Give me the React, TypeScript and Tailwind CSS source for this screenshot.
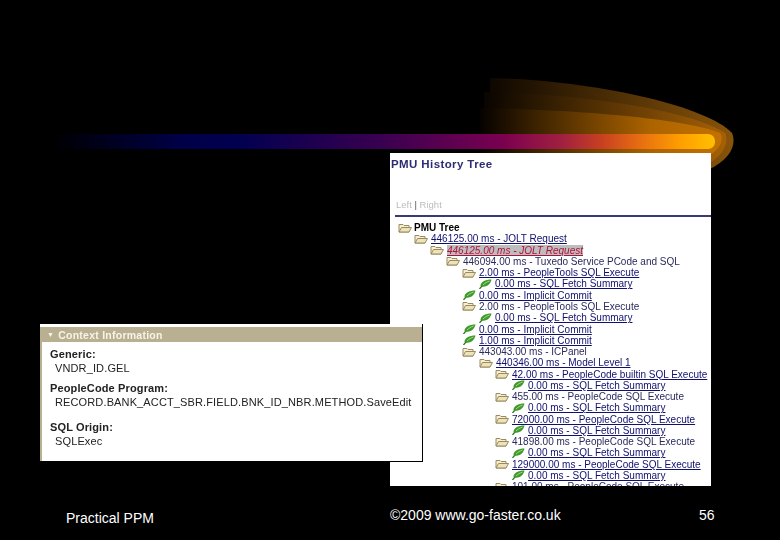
const font = "font-['Liberation_Sans',Arial,sans-serif]"

type Row = {
    pad: string
    icon: "folder" | "leaf"
    text: string
    link?: boolean
    active?: boolean
}

const rows: Row[] = [
    { pad: "pl-[24px]", icon: "folder", text: "446125.00 ms - JOLT Request", link: true },
    { pad: "pl-[40px]", icon: "folder", text: "446125.00 ms - JOLT Request", link: true, active: true },
    { pad: "pl-[56px]", icon: "folder", text: "446094.00 ms - Tuxedo Service PCode and SQL" },
    { pad: "pl-[72px]", icon: "folder", text: "2.00 ms - PeopleTools SQL Execute", link: true },
    { pad: "pl-[88px]", icon: "leaf", text: "0.00 ms - SQL Fetch Summary", link: true },
    { pad: "pl-[72px]", icon: "leaf", text: "0.00 ms - Implicit Commit", link: true },
    { pad: "pl-[72px]", icon: "folder", text: "2.00 ms - PeopleTools SQL Execute" },
    { pad: "pl-[88px]", icon: "leaf", text: "0.00 ms - SQL Fetch Summary", link: true },
    { pad: "pl-[72px]", icon: "leaf", text: "0.00 ms - Implicit Commit", link: true },
    { pad: "pl-[72px]", icon: "leaf", text: "1.00 ms - Implicit Commit", link: true },
    { pad: "pl-[72px]", icon: "folder", text: "443043.00 ms - ICPanel" },
    { pad: "pl-[89px]", icon: "folder", text: "440346.00 ms - Model Level 1", link: true },
    { pad: "pl-[105px]", icon: "folder", text: "42.00 ms - PeopleCode builtin SQL Execute", link: true },
    { pad: "pl-[121px]", icon: "leaf", text: "0.00 ms - SQL Fetch Summary", link: true },
    { pad: "pl-[105px]", icon: "folder", text: "455.00 ms - PeopleCode SQL Execute" },
    { pad: "pl-[121px]", icon: "leaf", text: "0.00 ms - SQL Fetch Summary", link: true },
    { pad: "pl-[105px]", icon: "folder", text: "72000.00 ms - PeopleCode SQL Execute", link: true },
    { pad: "pl-[121px]", icon: "leaf", text: "0.00 ms - SQL Fetch Summary", link: true },
    { pad: "pl-[105px]", icon: "folder", text: "41898.00 ms - PeopleCode SQL Execute" },
    { pad: "pl-[121px]", icon: "leaf", text: "0.00 ms - SQL Fetch Summary", link: true },
    { pad: "pl-[105px]", icon: "folder", text: "129000.00 ms - PeopleCode SQL Execute", link: true },
    { pad: "pl-[121px]", icon: "leaf", text: "0.00 ms - SQL Fetch Summary", link: true },
    { pad: "pl-[105px]", icon: "folder", text: "101.00 ms - PeopleCode SQL Execute" },
]

function FolderIcon() {
    return (
        <svg width="14" height="10" viewBox="0 0 14 10" className="shrink-0">
            <path d="M1 1.500h4l1 1h5v6.500H1z" fill="#f6efd6" stroke="#9a8a5c" strokeWidth="1" />
            <path d="M3.500 4.500H13.500L11 9H1z" fill="#ece2bc" stroke="#9a8a5c" strokeWidth="1" />
        </svg>
    )
}

function LeafIcon() {
    return (
        <svg width="14" height="10" viewBox="0 0 14 10" className="shrink-0">
            <path d="M1.500 10C2.500 8.500 3.500 7.500 5 6" stroke="#2f7a20" strokeWidth="1.300" fill="none" />
            <path d="M2.500 7C2.500 3 7 0.500 13.500 0.500C12.500 5 9 8.500 3.500 7.500z" fill="#3f9a2c" />
            <path d="M5 6C7 4 9 3 11.500 2" stroke="#b7e08e" strokeWidth="0.900" fill="none" />
        </svg>
    )
}

function Flare() {
    return (
        <svg width="780" height="200" viewBox="0 0 780 200" className="absolute left-0 top-0">
            <defs>
                <linearGradient id="outer" x1="483" x2="735" y1="0" y2="0" gradientUnits="userSpaceOnUse">
                    <stop offset="0" stopColor="#0a0500" />
                    <stop offset="1" stopColor="#8a540a" />
                </linearGradient>
                <linearGradient id="middle" x1="483" x2="730" y1="0" y2="0" gradientUnits="userSpaceOnUse">
                    <stop offset="0" stopColor="#080400" />
                    <stop offset="1" stopColor="#a86206" />
                </linearGradient>
                <linearGradient id="inner" x1="480" x2="725" y1="0" y2="0" gradientUnits="userSpaceOnUse">
                    <stop offset="0" stopColor="#050200" />
                    <stop offset="0.7" stopColor="#ad6400" />
                    <stop offset="1" stopColor="#c47200" />
                </linearGradient>
            </defs>
            <path d="M490 78C590 80 705 105 732 133C737 145 730 160 708 170L490 170z" fill="url(#outer)" />
            <path d="M484 92C590 94 695 112 725 133C730 143 722 156 708 164L484 164z" fill="url(#middle)" />
            <path d="M480 108C590 110 690 120 720 133C725 141 718 151 708 156L480 156z" fill="url(#inner)" />
        </svg>
    )
}

function TreeRow({ row }: { row: Row }) {
    return (
        <div className={`flex h-[11.27px] items-center gap-[3px] whitespace-nowrap ${row.pad}`}>
            {row.icon === "folder" ? <FolderIcon /> : <LeafIcon />}
            <span
                className={
                    row.active
                        ? "bg-[#bdbdbd] italic text-[#b0103c] underline"
                        : row.link
                            ? "text-[#10106e] underline"
                            : "text-[#2a2a5e]"
                }
            >
                {row.text}
            </span>
        </div>
    )
}

function HistoryPanel() {
    return (
        <div className={`relative ml-[390px] mt-[4px] h-[333px] w-[321px] overflow-hidden bg-white ${font}`}>
            <div className="ml-px mt-[5px] text-[11.5px] font-bold leading-[13px] tracking-[0.4px] text-[#2c2c72] blur-[0.3px]">PMU History Tree</div>
            <div className="ml-[6px] mt-[28px] text-[9.5px] leading-[12px] text-[#bdbdbd] blur-[0.3px]">
                Left <span className="text-[#555]">|</span> Right
            </div>
            <div className="ml-[5px] mt-[4px] h-[2px] bg-[#3c3a72]" />
            <div className="mt-[5px] text-[10px] leading-[11px] blur-[0.4px]">
                <div className="flex h-[11.27px] items-center gap-[2px] pl-[8px] font-bold text-black">
                    <FolderIcon />
                    <span>PMU Tree</span>
                </div>
                {rows.map((row, i) => (
                    <TreeRow key={i} row={row} />
                ))}
            </div>
        </div>
    )
}

function ContextPanel() {
    return (
        <div className={`absolute left-[40px] top-[324px] h-[138px] w-[383px] border-b border-r border-black bg-white pl-[2px] pt-[3px] ${font}`}>
            <div className="absolute bottom-0 left-0 top-[3px] w-[2px] bg-[#b8b090]" />
            <div className="flex h-[15px] items-center gap-[4px] bg-[#b8b090] pl-[5px] pt-[2px] text-[10.5px] font-bold tracking-[0.25px] text-[#f6f4e8] blur-[0.3px]">
                <span className="text-[7px]">▼</span>
                <span>Context Information</span>
            </div>
            <div className="pl-[8px] pt-[6px] text-[11px] leading-[13px] tracking-[0.13px] text-[#222] blur-[0.3px]">
                <div className="font-bold">Generic:</div>
                <div className="mt-px pl-[5px]">VNDR_ID.GEL</div>
                <div className="mt-[7px] font-bold">PeopleCode Program:</div>
                <div className="mt-px whitespace-nowrap pl-[5px]">RECORD.BANK_ACCT_SBR.FIELD.BNK_ID_NBR.METHOD.SaveEdit</div>
                <div className="mt-[12px] font-bold">SQL Origin:</div>
                <div className="mt-px pl-[5px]">SQLExec</div>
            </div>
        </div>
    )
}

export default function App() {
    return (
        <div className="relative h-[540px] w-[780px] overflow-hidden bg-black pt-[134px]">
            <Flare />
            <div className="relative ml-[50px] h-[15px] w-[665px] rounded-r-[7px] bg-[linear-gradient(90deg,#000000_0%,#000048_20%,#000050_28%,#3a0050_50%,#7a0050_68%,#a02040_77%,#c84020_83%,#e87010_89%,#ffa000_95%,#ffc000_100%)]" />
            <HistoryPanel />
            <ContextPanel />
            <div className={`relative mt-[20px] flex text-white ${font}`}>
                <span className="ml-[66px] mt-[3px] w-[324px] text-[14px] leading-[18px]">Practical PPM</span>
                <span className="w-[309px] text-[14px] leading-[18px]">©2009 www.go-faster.co.uk</span>
                <span className="text-[14px] leading-[18px]">56</span>
            </div>
        </div>
    )
}
